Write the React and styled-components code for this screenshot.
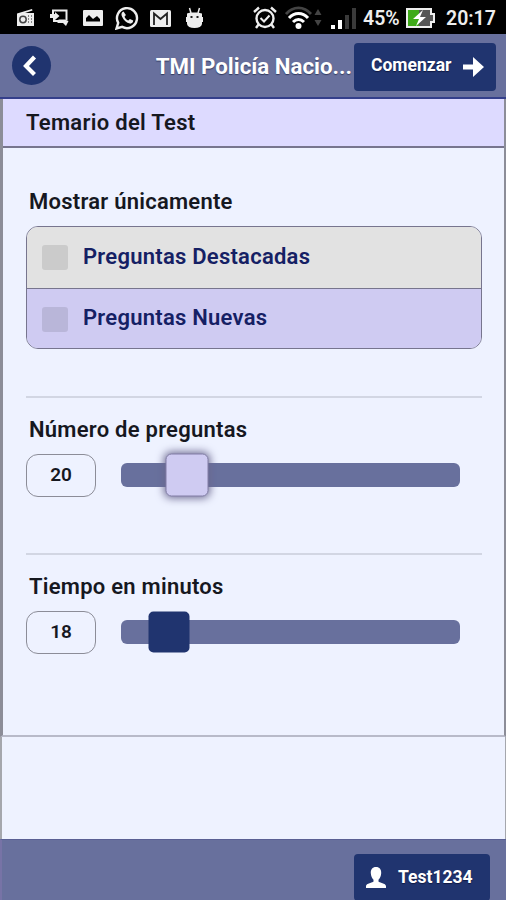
import React, { useState } from "react"
import styled, { createGlobalStyle } from 'styled-components'

const BackIcon = () => (
  <svg width="16" height="22" viewBox="0 0 16 22">
    <path d="M12.500 2 4 11l8.500 8.500" fill="none" stroke="#fff" strokeWidth="4.200" />
  </svg>
)

const ArrowIcon = () => (
  <svg width="21" height="20" viewBox="0 0 21 20">
    <path d="M0 7.500h10V0l11 10-11 10v-7.500H0z" fill="#fff" />
  </svg>
)

const UserIcon = () => (
  <svg width="22" height="22" viewBox="0 0 22 22">
    <path d="M11 0c3.600 0 5.500 2.600 5.200 6.200-.2 2.900-1.200 5.200-2.700 6.500v1.700c.6 1.200 7.500 1.800 7.500 4.600V21H1v-2c0-2.800 6.900-3.400 7.500-4.600v-1.700C7 11.400 6 9.100 5.800 6.200 5.500 2.600 7.400 0 11 0z" fill="#fff" />
  </svg>
)

const RadioIcon = () => (
  <svg width="18" height="18" viewBox="0 0 18 18">
    <path d="M0 4.500 15 0l.5 1.500L8 4h9v13H0z" fill="#eee" />
    <circle cx="6" cy="10.500" r="3.200" fill="none" stroke="#444" strokeWidth="1.500" />
    <path d="M11.500 6v9M14.500 6v9" stroke="#888" strokeDasharray="2 1" />
  </svg>
)

const CastIcon = () => (
  <svg width="20" height="18" viewBox="0 0 20 18">
    <path d="M3 5V1.500h13.500V11M4 9v3h5" fill="none" stroke="#eee" strokeWidth="2" />
    <path d="M0 5h5V3l4.500 4L5 11V9H0z" fill="#eee" />
    <path d="m6 12 3-1.500h6l3.500 1.500-2.500 5-3-3H8z" fill="#eee" />
  </svg>
)

const PictureIcon = () => (
  <svg width="20" height="16" viewBox="0 0 20 16">
    <rect width="20" height="16" rx="1" fill="#eee" />
    <path d="M3 11.500V8l3-3 4 4 4-3 3 3v2.500z" fill="#000" />
  </svg>
)

const WhatsappIcon = () => (
  <svg width="24" height="24" viewBox="0 0 24 24">
    <path d="m1.500 22.500 1.700-5.600a10 10 0 1 1 4 4z" fill="none" stroke="#eee" strokeWidth="2.400" />
    <path d="M8.500 5.500c-2 .6-2.700 2.700-1.400 5.200 1.600 3.400 4.400 6 7.700 6.900 1.800.3 3.400-1 3.400-3l-3.300-1.700-1.600 1.600c-1.700-.7-3.100-2.100-3.800-3.800l1.400-1.600z" fill="#eee" />
  </svg>
)

const MailIcon = () => (
  <svg width="21" height="17" viewBox="0 0 21 17">
    <rect width="21" height="17" rx="1.500" fill="#eee" />
    <path d="M4 15V3.500l6.500 5.500L17 3.500V15" fill="none" stroke="#222" strokeWidth="1.800" />
  </svg>
)

const DroidIcon = () => (
  <svg width="17" height="22" viewBox="0 0 17 22">
    <path d="m3.500 1 1.500 5m8.500-5L12 6" stroke="#eee" strokeWidth="1.500" />
    <path d="M1 6.500C2 5 14 5 16 6.500V10h1v5h-1v2c-.5 2.500-3 4-7.500 4S1.500 19.500 1 17v-2H0v-5h1z" fill="#eee" />
    <path d="M4.500 9h2v2h-2zm6 0h2v2h-2z" fill="#222" />
  </svg>
)

const AlarmIcon = () => (
  <svg width="24" height="24" viewBox="0 0 24 24" fill="none" stroke="#eee" strokeWidth="2.400">
    <circle cx="12" cy="12.500" r="8.500" />
    <path d="m1 6 5-4.500M23 6l-5-4.500M5.500 18.500 3 22M18.500 18.500 21 22" />
    <path d="m7.500 12 3.500 3.500 5.500-6" strokeWidth="2" />
  </svg>
)

const WifiIcon = () => (
  <svg width="38" height="24" viewBox="0 0 38 24">
    <path d="M1 8C8-.2 19-.2 26 8" fill="none" stroke="#444" strokeWidth="2.800" />
    <path d="M4 12c5.500-6 13.500-6 19 0M8 16c3.500-3.500 7.500-3.500 11 0" fill="none" stroke="#fff" strokeWidth="3" />
    <circle cx="13.500" cy="20" r="3" fill="#fff" />
    <path d="m29.500 9 3.500-6 3.500 6zm0 5h7L33 20z" fill="#444" />
  </svg>
)

const SignalIcon = () => (
  <svg width="26" height="22" viewBox="0 0 26 22">
    <path d="M0 18h4v4H0zM7 13h4v9H7z" fill="#fff" />
    <path d="M14 8h4v14h-4zM21 1h4v21h-4z" fill="#3a3a3a" />
  </svg>
)

const BatteryIcon = () => (
  <svg width="29" height="20" viewBox="0 0 29 20">
    <path d="M1 1h24v5h3v8h-3v5H1z" fill="#555" stroke="#eee" strokeWidth="2" />
    <path d="M2 2h11v16H2z" fill="#3eaa18" />
    <path d="m17 2-10 9h6l-3 7 10-9h-6z" fill="#fff" />
  </svg>
)

const SliderField = ({ label, initial, min, max, active }) => {
  const [value, setValue] = useState(initial)

  // place the handle along the track
  const handleOffset = ((value - min) / (max - min)) * 100

  return (
    <Field>
      <Label>{label}</Label>
      <Controls>
        <ValueBox>{value}</ValueBox>
        <Track>
          <Handle $active={active} style={{ left: `${handleOffset}%` }} />
          <RangeInput
            type="range"
            min={min}
            max={max}
            value={value}
            aria-label={label}
            onChange={(e) => setValue(+e.target.value)}
          />
        </Track>
      </Controls>
    </Field>
  )
}

const App = () => {
  const [checked, setChecked] = useState({})

  const toggle = (name) => setChecked({ ...checked, [name]: !checked[name] })

  return (
    <>
      <GlobalStyle />
      <Screen>
        <StatusBar>
          <Notifications>
            <RadioIcon />
            <CastIcon />
            <PictureIcon />
            <WhatsappIcon />
            <MailIcon />
            <DroidIcon />
          </Notifications>
          <System>
            <AlarmIcon />
            <WifiIcon />
            <SignalIcon />
            <Percent>45%</Percent>
            <BatteryIcon />
            <Clock>20:17</Clock>
          </System>
        </StatusBar>

        <Header>
          <BackButton><BackIcon /></BackButton>
          <Title>TMI Policía Nacio...</Title>
          <StartButton>
            <span>Comenzar</span>
            <ArrowIcon />
          </StartButton>
        </Header>

        <Main>
          <SectionTitle>Temario del Test</SectionTitle>
          <Content>
            <Label>Mostrar únicamente</Label>
            <Options>
              <Option onClick={() => toggle('destacadas')}>
                <Checkbox $checked={checked.destacadas} />
                <span>Preguntas Destacadas</span>
              </Option>
              <Option $tinted onClick={() => toggle('nuevas')}>
                <Checkbox $checked={checked.nuevas} />
                <span>Preguntas Nuevas</span>
              </Option>
            </Options>
            <SliderField label="Número de preguntas" initial={20} min={0} max={102} active />
            <SliderField label="Tiempo en minutos" initial={18} min={0} max={128} />
          </Content>
        </Main>

        <Spacer />

        <Footer>
          <UserButton>
            <UserIcon />
            <span>Test1234</span>
          </UserButton>
        </Footer>
      </Screen>
    </>
  )
}

// styles

const GlobalStyle = createGlobalStyle`
  * {
    box-sizing: border-box;
  }
  body {
    margin: 0;
    font-family: Roboto, sans-serif;
    color: #16181f;
    background: #eef2ff;
  }
  button {
    border: none;
    padding: 0;
    font-family: inherit;
    cursor: pointer;
  }
  svg {
    display: block;
    flex: none;
  }
`

const Screen = styled.div`
  display: flex;
  flex-direction: column;
  width: 506px;
  height: 900px;
  overflow: hidden;
`

const StatusBar = styled.div`
  display: flex;
  justify-content: space-between;
  align-items: center;
  height: 34px;
  padding: 2px 11px 0 17px;
  background: #000;
  color: #eee;
`

const Notifications = styled.div`
  display: flex;
  align-items: center;
  gap: 13px;

  svg:nth-child(2) {
    margin-left: 2px;
  }
  svg:nth-child(4) {
    margin-left: -1px;
  }
  svg:nth-child(5) {
    margin-left: -2px;
  }
  svg:nth-child(6) {
    margin-left: 2px;
  }
`

const System = styled.div`
  display: flex;
  align-items: center;
  gap: 8px;
`

const Percent = styled.span`
  width: 38px;
  margin: 0 -3px 0 -2px;
  font-size: 19.500px;
  font-weight: 600;
  white-space: nowrap;
`

const Clock = styled.span`
  width: 49px;
  margin-left: 3px;
  font-size: 19.500px;
  font-weight: 600;
`

const Header = styled.header`
  display: flex;
  align-items: center;
  height: 65px;
  padding: 0 10px 0 12px;
  background: #68709d;
  border-bottom: 2px solid #343f8b;
`

const BackButton = styled.button`
  display: grid;
  place-items: center;
  width: 39px;
  height: 39px;
  padding-right: 3px;
  border-radius: 50%;
  background: #20346f;
`

const Title = styled.h1`
  flex: 1;
  margin: 0 2px 0 0;
  text-align: right;
  font-size: 22.300px;
  font-weight: 700;
  color: #fff;
  text-shadow: 0 1px 1px #333a60;
  white-space: nowrap;
`

const StartButton = styled.button`
  display: flex;
  align-items: center;
  justify-content: space-between;
  width: 142px;
  height: 48px;
  margin-top: 2px;
  padding: 0 12px 0 17px;
  border-radius: 4px;
  background: #20346f;
  color: #fff;
  font-size: 17.500px;
  font-weight: 700;
  text-shadow: 0 1px 1px #101a44;

  span {
    padding-bottom: 3px;
  }
`

const Main = styled.main`
  height: 638px;
  border: solid #8c8d98;
  border-width: 0 2px 2px 3px;
  border-bottom-color: #b8bac9;
`

const SectionTitle = styled.h2`
  height: 49px;
  margin: 0;
  padding-left: 23px;
  line-height: 47px;
  font-size: 22px;
  font-weight: 600;
  letter-spacing: 0.3px;
  background: #dddaff;
  border-bottom: 2px solid #77758e;
`

const Content = styled.div`
  padding: 41px 22px 0 23px;
`

const Label = styled.div`
  padding-left: 3px;
  line-height: 26px;
  font-size: 22px;
  font-weight: 600;
  letter-spacing: 0.25px;
`

const Options = styled.div`
  height: 123px;
  margin-top: 11px;
  border: 1px solid #77758e;
  border-radius: 12px;
  overflow: hidden;
`

const Option = styled.div`
  display: flex;
  align-items: center;
  gap: 15px;
  height: 61px;
  padding-left: 15px;
  font-size: 22px;
  font-weight: 600;
  letter-spacing: 0.25px;
  color: #152064;
  background: ${({ $tinted }) => ($tinted ? '#cfcbf2' : '#e2e2e2')};
  cursor: pointer;

  span:last-child {
    padding-bottom: 3px;
  }

  & + & {
    border-top: 1px solid #77758e;
  }
`

const Checkbox = styled.span`
  width: 26px;
  height: 25px;
  border-radius: 3px;
  background: ${({ $checked }) => ($checked ? '#20346f' : 'rgba(0, 0, 0, 0.1)')};
`

const Field = styled.div`
  height: 157px;
  padding-top: 19px;
  border-top: 2px solid #d2d6e3;

  ${Options} + & {
    margin-top: 47px;
  }
`

const Controls = styled.div`
  display: flex;
  align-items: center;
  margin-top: 11px;
`

const ValueBox = styled.div`
  width: 70px;
  height: 43px;
  margin-right: 25px;
  border: 1.500px solid #8c8d98;
  border-radius: 12px;
  line-height: 39px;
  text-align: center;
  font-size: 19px;
  font-weight: 600;
`

const Track = styled.div`
  position: relative;
  width: 339px;
  height: 24px;
  margin-bottom: 1px;
  border-radius: 6px;
  background: #68709d;
`

const Handle = styled.div`
  position: absolute;
  top: 50%;
  width: 41px;
  height: 41px;
  border-radius: 5px;
  background: #20346f;
  transform: translate(-50%, -50%);

  ${({ $active }) => $active && `
    width: 43px;
    height: 43px;
    border: 1px solid #817da5;
    border-radius: 6px;
    background: #cfcbf2;
    box-shadow: 0 0 8px 1px #6b6890;
  `}
`

const RangeInput = styled.input`
  position: absolute;
  inset: 0;
  width: 100%;
  margin: 0;
  opacity: 0;
  cursor: pointer;
`

const Spacer = styled.div`
  flex: 1;
  border-left: 2px solid #a5a7ad;
  border-right: 1px solid #a5a7ad;
`

const Footer = styled.footer`
  display: flex;
  justify-content: flex-end;
  align-items: flex-start;
  height: 61px;
  padding: 14px 16px 0 0;
  background: #68709d;
  border-top: 1px solid #5a6094;
  border-left: 2px solid #7773a6;
`

const UserButton = styled.button`
  display: flex;
  align-items: center;
  gap: 11px;
  width: 136px;
  height: 47px;
  padding: 0 0 0 11px;
  border-radius: 4px;
  background: #20346f;
  color: #fff;
  font-size: 17.500px;
  font-weight: 700;
  text-shadow: 0 1px 1px #101a44;

  span {
    padding-bottom: 2px;
  }
`

export default App
